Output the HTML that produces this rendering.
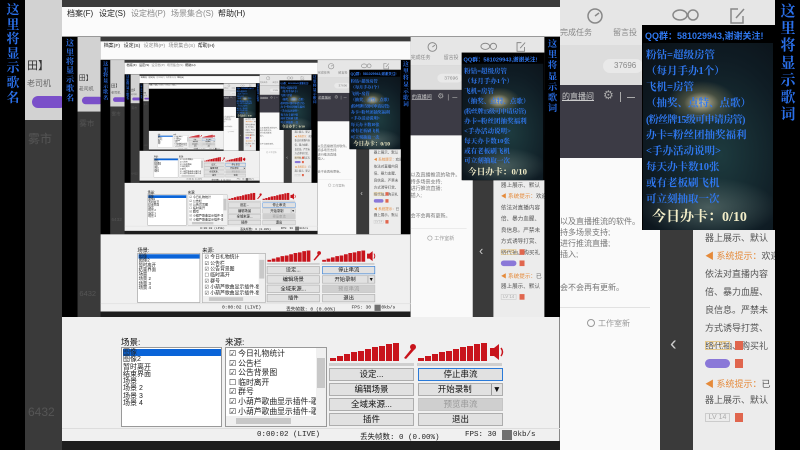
<!DOCTYPE html>
<html><head><meta charset="utf-8">
<style>
*{margin:0;padding:0;box-sizing:border-box}
body{width:800px;height:450px;overflow:hidden;background:#222;font-family:"Liberation Sans","Noto Sans CJK SC",sans-serif}
.scr{position:absolute;left:0;top:0;width:800px;height:450px;overflow:hidden;background:#2a2a2a;transform-origin:0 0}
.a{position:absolute}
.vt{position:absolute;font-family:"Liberation Serif","Noto Serif CJK SC",serif;font-weight:bold;color:#2a6fe8;text-align:center}
.t{position:absolute;white-space:nowrap}
.btn{position:absolute;height:13px;background:#e1e1e1;border:1px solid #adadad;font-size:8.5px;line-height:11px;text-align:center;color:#111}
.ov{position:absolute;white-space:nowrap;font-family:"Liberation Serif","Noto Serif CJK SC",serif;font-weight:bold;color:#2f78f0;font-size:10.5px;left:4px}
</style></head><body>
<div class="scr" id="scr">
  <div class="a" style="left:0;top:0;width:25px;height:450px;background:#000"></div>
  <div class="vt" style="left:5px;top:3px;width:16px;font-size:13px;line-height:14.6px">这<br>里<br>将<br>显<br>示<br>歌<br>名</div>
  <div class="a" style="left:25px;top:0;width:37px;height:120px;background:#d2d2d2"></div>
  <div class="t" style="left:27px;top:57px;font-size:11px;color:#333">田】</div>
  <div class="t" style="left:27px;top:78px;font-size:8px;color:#666">老司机</div>
  <div class="a" style="left:32px;top:96px;width:34px;height:12px;border-radius:6px;background:#7a4fc9"></div>
  <div class="a" style="left:25px;top:120px;width:37px;height:330px;background:#3a3a3a"></div>
  <div class="t" style="left:28px;top:130px;font-size:12px;color:#555">雾市</div>
  <div class="t" style="left:28px;top:405px;font-size:12px;color:#555">6432</div>

  <div class="a" style="left:62px;top:0;width:498px;height:7px;background:#3b3b3b"></div>
  <div class="a" style="left:62px;top:7px;width:498px;height:30px;background:#fbfbfb;border-bottom:1px solid #999"></div>
  <div class="t" style="left:67px;top:8px;font-size:8px;color:#222">档案(F)</div>
  <div class="t" style="left:99px;top:8px;font-size:8px;color:#222">设定(S)</div>
  <div class="t" style="left:131px;top:8px;font-size:8px;color:#888">设定档(P)</div>
  <div class="t" style="left:171px;top:8px;font-size:8px;color:#888">场景集合(S)</div>
  <div class="t" style="left:218px;top:8px;font-size:8px;color:#222">帮助(H)</div>

  <div class="a slot" style="left:62px;top:37px;width:498px;height:280px;overflow:hidden;background:#000"></div>

  <div class="a" style="left:62px;top:317px;width:498px;height:124px;background:#f0f0f0;border-right:1px solid #888"></div>
  <div class="t" style="left:121px;top:336px;font-size:8.5px;color:#111">场景:</div>
  <div class="a" style="left:121px;top:347px;width:101px;height:80px;background:#fff;border:1px solid #999"></div>
  <div class="a" style="left:123px;top:349px;width:98px;height:7px;background:#0a64d8"></div>
  <div class="t" style="left:123px;top:349px;font-size:7px;line-height:7.3px;color:#222">图像<br>图像2<br>暂时离开<br>结束界面<br>场景<br>场景 2<br>场景 3<br>场景 4</div>
  <div class="t" style="left:225px;top:336px;font-size:8.5px;color:#111">来源:</div>
  <div class="a" style="left:225px;top:347px;width:102px;height:80px;background:#fff;border:1px solid #999"></div>
  <div class="t" style="left:229px;top:349px;font-size:7.8px;line-height:9.6px;color:#222">☑ 今日礼物统计<br>☑ 公告栏<br>☑ 公告背景图<br>☐ 临时离开<br>☑ 群号<br>☑ 小葫芦歌曲显示插件-歌<br>☑ 小葫芦歌曲显示插件-歌</div>
  <div class="a" style="left:316px;top:348px;width:10px;height:68px;background:#f0f0f0"></div>
  <div class="a" style="left:317px;top:358px;width:8px;height:30px;background:#c8c8c8"></div>
  <div class="a" style="left:226px;top:416px;width:100px;height:10px;background:#f0f0f0"></div>
  <div class="a" style="left:236px;top:418px;width:55px;height:6px;background:#c8c8c8"></div>

  <svg class="a" style="left:328px;top:338px" width="180" height="32">
    <g fill="#c8141c">
      <rect x="2" y="20" width="6" height="3"/><rect x="9" y="18" width="6" height="5"/><rect x="16" y="16" width="6" height="7"/><rect x="23" y="14" width="6" height="9"/><rect x="30" y="13" width="6" height="10"/><rect x="37" y="11" width="6" height="12"/><rect x="44" y="9" width="6" height="14"/><rect x="51" y="8" width="6" height="15"/><rect x="58" y="6" width="6" height="17"/><rect x="65" y="5" width="6" height="18"/>
      <rect x="90" y="20" width="6" height="3"/><rect x="97" y="18" width="6" height="5"/><rect x="104" y="16" width="6" height="7"/><rect x="111" y="14" width="6" height="9"/><rect x="118" y="13" width="6" height="10"/><rect x="125" y="11" width="6" height="12"/><rect x="132" y="9" width="6" height="14"/><rect x="139" y="8" width="6" height="15"/><rect x="146" y="6" width="6" height="17"/><rect x="153" y="5" width="6" height="18"/>
      <path d="M76 20 L84 10 L86 12 L78 21 Z"/><circle cx="85" cy="9" r="3"/>
      <path d="M162 10 h4 l5 -4 v16 l-5 -4 h-4z"/>
    </g>
    <path d="M173 10 q3 4 0 8" stroke="#c8141c" fill="none" stroke-width="1.5"/>
    <rect x="1" y="25" width="85" height="3" fill="#cfcfcf"/><rect x="89" y="25" width="85" height="3" fill="#cfcfcf"/>
  </svg>
  <div class="btn" style="left:329px;top:368px;width:85px">设定...</div>
  <div class="btn" style="left:329px;top:383px;width:85px">编辑场景</div>
  <div class="btn" style="left:329px;top:398px;width:85px">全域来源...</div>
  <div class="btn" style="left:329px;top:413px;width:85px">插件</div>
  <div class="btn" style="left:418px;top:368px;width:85px;border:1px solid #2a7ad8">停止串流</div>
  <div class="btn" style="left:418px;top:383px;width:85px">开始录制 <span style="float:right;border-left:1px solid #999;padding:0 1px">▼</span></div>
  <div class="btn" style="left:418px;top:398px;width:85px;background:#cfcfcf;color:#999;border-color:#c5c5c5">预览串流</div>
  <div class="btn" style="left:418px;top:413px;width:85px">退出</div>
  <div class="a" style="left:62px;top:428px;width:498px;height:1px;background:#ddd"></div>
  <div class="t" style="left:257px;top:431px;font-size:7.5px;color:#222;font-family:'Liberation Mono','Noto Sans CJK SC',monospace">0:00:02 (LIVE)</div>
  <div class="t" style="left:360px;top:431px;font-size:7.5px;color:#222;font-family:'Liberation Mono','Noto Sans CJK SC',monospace">丢失帧数: 0 (0.00%)</div>
  <div class="t" style="left:465px;top:431px;font-size:7.5px;color:#222;font-family:'Liberation Mono',monospace">FPS: 30</div>
  <div class="a" style="left:502px;top:430px;width:10px;height:10px;background:#707070"></div>
  <div class="t" style="left:513px;top:431px;font-size:7.5px;color:#222;font-family:'Liberation Mono',monospace">0kb/s</div>
  <div class="a" style="left:62px;top:441px;width:498px;height:9px;background:#1e1e1e"></div>

  <div class="a" style="left:560px;top:0;width:215px;height:45px;background:#e6e6e6"></div>
  <svg class="a" style="left:560px;top:3px" width="215" height="26" fill="none" stroke="#888" stroke-width="1.5">
    <circle cx="35" cy="13" r="7"/><path d="M35 13 l4 -3"/>
    <ellipse cx="120" cy="12" rx="7" ry="5"/><ellipse cx="133" cy="12" rx="5" ry="5"/>
    <path d="M178 6 h-7 v14 h12 v-7 M176 15 l8 -9"/>
    <path d="M225 6 h3 l2 9 h9 l2 -6 h-12"/>
  </svg>
  <div class="t" style="left:560px;top:27px;font-size:8px;color:#888">完成任务</div>
  <div class="t" style="left:613px;top:27px;font-size:8px;color:#888">留言投</div>
  <div class="a" style="left:560px;top:45px;width:215px;height:40px;background:#ddd"></div>
  <div class="a" style="left:603px;top:59px;width:40px;height:14px;border-radius:7px;background:#e9e9e9"></div>
  <div class="t" style="left:614px;top:61px;font-size:8px;color:#888">37696</div>
  <div class="a" style="left:560px;top:85px;width:215px;height:73px;background:#3c3b45"></div>
  <div class="t" style="left:562px;top:91px;font-size:8px;color:#ccc;text-decoration:underline">的直播间</div>
  <div class="t" style="left:603px;top:88px;font-size:12px;color:#aaa">⚙</div>
  <div class="a" style="left:620px;top:92px;width:1px;height:10px;background:#aaa"></div>
  <div class="a" style="left:627px;top:97px;width:8px;height:1px;background:#aaa"></div>
  <div class="a" style="left:560px;top:158px;width:100px;height:292px;background:#fafafa"></div>
  <div class="t" style="left:560px;top:216px;font-size:8px;line-height:11px;color:#777">以及直播推流的软件。<br>持多场景支持;<br>进行推流直播;<br>插入;<br><br><br>会不会再有更新。</div>
  <div class="a" style="left:560px;top:307px;width:90px;height:1px;background:#e2e2e2"></div>
  <div class="a" style="left:587px;top:319px;width:8px;height:8px;border:1px solid #999;border-radius:50%"></div>
  <div class="t" style="left:598px;top:318px;font-size:8px;color:#999">工作室新</div>
  <div class="a" style="left:660px;top:230px;width:33px;height:220px;background:#3a3a3a"></div>
  <div class="t" style="left:670px;top:333px;font-size:20px;color:#ccc">‹</div>
  <div class="a" style="left:693px;top:230px;width:82px;height:220px;background:#ececec"></div>
  <div class="t" style="left:705px;top:229px;font-size:9px;line-height:18px;color:#555">器上展示、默认<br><span style="color:#e58a3a">◀ 系统提示：</span>欢迎<br>依法对直播内容<br>倍、暴力血腥、<br>良信息。严禁未<br>方式诱导打赏、<br>络代抽、购买礼</div>
  <div class="a" style="left:705px;top:341px;width:25px;height:9px;border:1px solid #e5c88a;font-size:7px;color:#d8b060;line-height:7px;text-align:center">LV 22</div>
  <div class="a" style="left:735px;top:341px;width:8px;height:9px;background:#e0664e"></div>
  <div class="a" style="left:705px;top:359px;width:25px;height:9px;border-radius:5px;background:#8a78d8"></div>
  <div class="a" style="left:735px;top:359px;width:8px;height:9px;background:#e0664e"></div>
  <div class="t" style="left:705px;top:376px;font-size:9px;line-height:16px;color:#555"><span style="color:#e58a3a">◀ 系统提示：</span>已<br>器上展示、默认</div>
  <div class="a" style="left:705px;top:413px;width:25px;height:9px;border:1px solid #ccc;font-size:7px;color:#aaa;line-height:7px;text-align:center">LV 14</div>
  <div class="a" style="left:735px;top:413px;width:8px;height:9px;background:#e0664e"></div>

  <div class="a" style="left:775px;top:0;width:25px;height:450px;background:#000"></div>
  <div class="vt" style="left:779px;top:4px;width:18px;font-size:15px;line-height:17.2px">这<br>里<br>将<br>显<br>示<br>歌<br>词</div>

  <div class="a" style="left:642px;top:25px;width:133px;height:205px;background:#000">
    <div class="a" style="left:1px;top:18px;width:130px;height:187px;background:radial-gradient(ellipse 35px 22px at 45% 32%,rgba(255,235,190,.8),rgba(160,150,100,.35) 50%,transparent 100%),radial-gradient(ellipse 70px 30px at 50% 88%,rgba(150,170,160,.4),transparent 100%),radial-gradient(ellipse at 60% 60%,#1d3a3e,#0f1c24 60%,#0a1016)"></div>
    <div class="t" style="left:3px;top:4px;font-size:9px;font-weight:bold;color:#2f78f0">QQ群：581029943,谢谢关注!</div>
    <div class="ov" style="top:22px">粉钻=超级房管</div>
    <div class="ov" style="top:38px">（每月手办1个）</div>
    <div class="ov" style="top:54px">飞机=房管</div>
    <div class="ov" style="top:70px">（抽奖、点特、点歌）</div>
    <div class="ov" style="top:86px;letter-spacing:-.6px;font-size:10px">(粉丝牌15级可申请房管)</div>
    <div class="ov" style="top:102px">办卡=粉丝团抽奖福利</div>
    <div class="ov" style="top:118px">&lt;手办活动说明&gt;</div>
    <div class="ov" style="top:134px">每天办卡数10张</div>
    <div class="ov" style="top:150px">或有老板刷飞机</div>
    <div class="ov" style="top:166px">可立刻抽取一次</div>
    <div class="ov" style="top:181px;left:10px;font-size:14px;color:#f2edc8">今日办卡：0/10</div>
  </div>
</div>
<script>
(function(){
  var base=document.getElementById('scr');
  var tpl=base.cloneNode(true);tpl.removeAttribute('id');
  var slot=base.querySelector('.slot');
  for(var i=0;i<4&&slot;i++){
    var c=tpl.cloneNode(true);
    c.style.transform='scale(0.6225)';
    slot.appendChild(c);
    slot=c.querySelector('.slot');
  }
})();
</script>
</body></html>
